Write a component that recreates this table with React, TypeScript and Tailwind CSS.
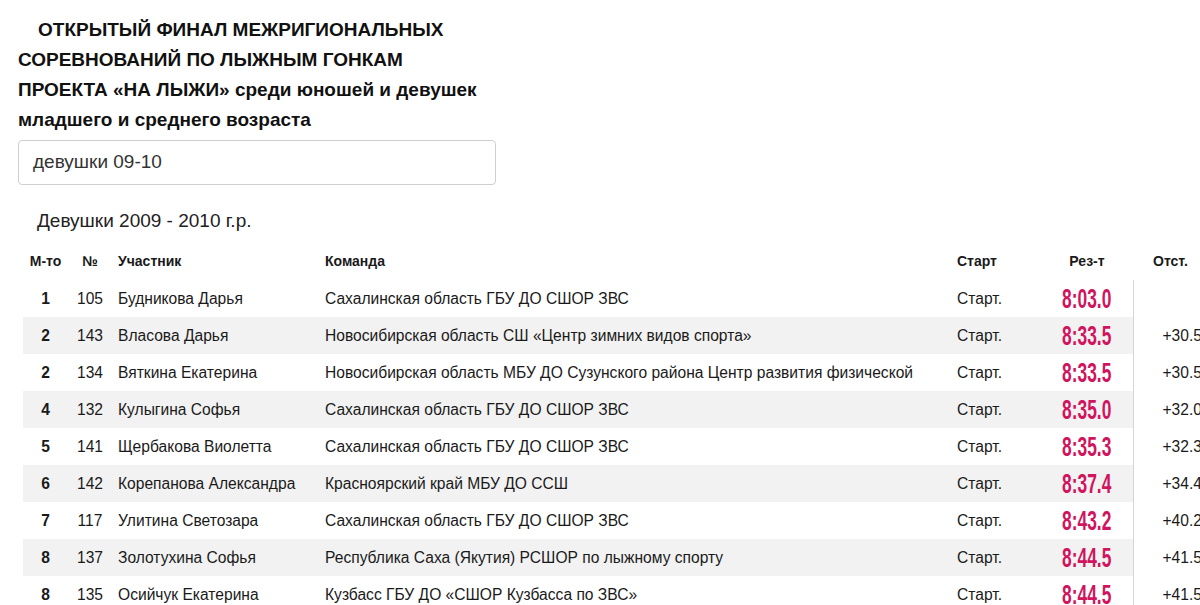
import React from "react";

const rows = [
  ["1", "105", "Будникова Дарья", "Сахалинская область ГБУ ДО СШОР ЗВС", "8:03.0", ""],
  ["2", "143", "Власова Дарья", "Новосибирская область СШ «Центр зимних видов спорта»", "8:33.5", "+30.5"],
  ["2", "134", "Вяткина Екатерина", "Новосибирская область МБУ ДО Сузунского района Центр развития физической", "8:33.5", "+30.5"],
  ["4", "132", "Кулыгина Софья", "Сахалинская область ГБУ ДО СШОР ЗВС", "8:35.0", "+32.0"],
  ["5", "141", "Щербакова Виолетта", "Сахалинская область ГБУ ДО СШОР ЗВС", "8:35.3", "+32.3"],
  ["6", "142", "Корепанова Александра", "Красноярский край МБУ ДО ССШ", "8:37.4", "+34.4"],
  ["7", "117", "Улитина Светозара", "Сахалинская область ГБУ ДО СШОР ЗВС", "8:43.2", "+40.2"],
  ["8", "137", "Золотухина Софья", "Республика Саха (Якутия) РСШОР по лыжному спорту", "8:44.5", "+41.5"],
  ["8", "135", "Осийчук Екатерина", "Кузбасс ГБУ ДО «СШОР Кузбасса по ЗВС»", "8:44.5", "+41.5"],
];

export default function App() {
  return (
    <div
      className="w-[1200px] h-[605px] overflow-hidden bg-white text-[#111]"
      style={{ fontFamily: '"Liberation Sans", Arial, sans-serif' }}
    >
      <div className="pl-[18px] pt-[15px]">
        <h1 className="text-[19px] font-bold leading-[30px] text-[#111]">
          <span className="pl-[20px]">ОТКРЫТЫЙ ФИНАЛ МЕЖРИГИОНАЛЬНЫХ</span>
          <br />
          СОРЕВНОВАНИЙ ПО ЛЫЖНЫМ ГОНКАМ
          <br />
          ПРОЕКТА «НА ЛЫЖИ» среди юношей и девушек
          <br />
          младшего и среднего возраста
        </h1>
        <div className="mt-[5px] w-[478px] h-[45px] rounded-[4px] border border-[#cfcfcf] flex items-center pl-[14px] text-[19px] text-[#333]">
          девушки 09-10
        </div>
        <div className="mt-[25px] pl-[19px] text-[19px] leading-[22px] text-[#222]">
          Девушки 2009 - 2010 г.р.
        </div>
      </div>
      <div className="pl-[23px] mt-[11px]">
        <table className="border-collapse w-[1190px] table-fixed text-[15.6px] text-[#1a1a1a]">
          <colgroup>
            <col className="w-[45px]" />
            <col className="w-[44px]" />
            <col className="w-[207px]" />
            <col className="w-[632px]" />
            <col className="w-[90px]" />
            <col className="w-[92px]" />
            <col className="w-[80px]" />
          </colgroup>
          <thead>
            <tr className="h-[37px] text-[14px] font-bold">
              <th className="text-center font-bold">М-то</th>
              <th className="text-center font-bold">№</th>
              <th className="text-left pl-[6px] font-bold">Участник</th>
              <th className="text-left pl-[6px] font-bold">Команда</th>
              <th className="text-left pl-[6px] font-bold">Старт</th>
              <th className="text-center font-bold">Рез-т</th>
              <th className="text-left pl-[20px] font-bold">Отст.</th>
            </tr>
          </thead>
          <tbody>
            {rows.map((r, i) => (
              <tr key={i} className={`h-[37px] ${i % 2 === 1 ? "bg-[#f2f2f2]" : "bg-white"}`}>
                <td className="text-center font-bold">{r[0]}</td>
                <td className="text-center">{r[1]}</td>
                <td className="pl-[6px] whitespace-nowrap overflow-hidden">{r[2]}</td>
                <td className="pl-[6px] whitespace-nowrap overflow-hidden">{r[3]}</td>
                <td className="pl-[6px]">Старт.</td>
                <td className="text-center">
                  <span className="inline-block scale-x-[0.62] text-[28px] font-bold leading-[30px] text-[#d0145e] translate-y-[1px]">
                    {r[4]}
                  </span>
                </td>
                <td className="bg-white border-l border-[#d6d6d6] pl-[29px] whitespace-nowrap">{r[5]}</td>
              </tr>
            ))}
          </tbody>
        </table>
      </div>
    </div>
  );
}
